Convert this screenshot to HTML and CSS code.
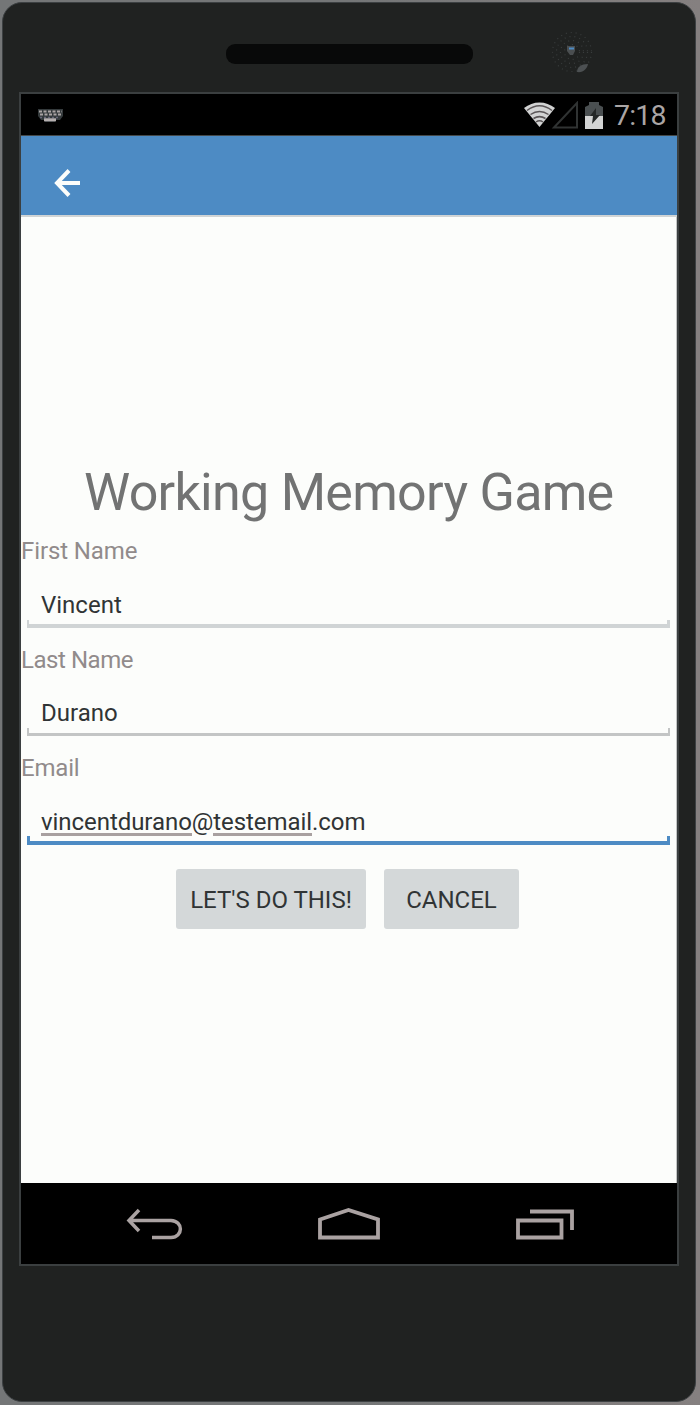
FILE: index.html
```
<!DOCTYPE html>
<html lang="en">
<head>
<meta charset="utf-8">
<title>Working Memory Game</title>
<link rel="stylesheet" href="styles.css">
</head>
<body>
<div class="phone">
  <header class="bezel">
    <div class="speaker"></div>
    <svg class="camera" width="42" height="42" viewBox="0 0 42 42">
      <g fill="none" stroke="#393d3d" stroke-width="1.200" stroke-dasharray="1 4">
        <circle cx="21" cy="21" r="19.500"/>
        <circle cx="21" cy="21" r="15.500"/>
        <circle cx="21" cy="21" r="11.500"/>
        <circle cx="21" cy="21" r="7.500"/>
      </g>
      <path d="M16 15h8v5l-2 4h-3l-3-4z" fill="#4a4e50"/>
      <path d="M18 16.500h5v2h-5z" fill="#4d8bc4"/>
      <path d="M26 41c0-5 4-8 11-8-1 5-5 9-11 8z" fill="#4c5052"/>
    </svg>
  </header>
  <main class="screen">
    <div class="status">
      <svg width="28" height="18" viewBox="0 0 28 18">
        <path d="M1 2h25v7l-3 4h-4l-1 2H8l-1-2H4l-3-4z" fill="#343a3c"/>
        <path d="M2 4.500h23M3 7.500h21" stroke="#aaa4a4" stroke-width="2" stroke-dasharray="3 1.500"/>
        <path d="M3 10.500h20" stroke="#667" stroke-width="1.500" stroke-dasharray="2 2"/>
        <path d="M7 12.800h12" stroke="#b5afaf" stroke-width="3"/>
      </svg>
      <div class="status-right">
        <svg width="82" height="30" viewBox="0 0 82 30">
          <path d="M1 7C10-.5 23-.5 32 7L16.500 26z" fill="#d2d3d3"/>
          <g fill="none" stroke="#5a5557" stroke-width="1.500">
            <path d="M4 9.500c8-6 17-6 25 0M7.500 13.500c6-4 12-4 18 0M10.500 17.500c4-2.500 8-2.500 12 0M13 21c2-1.500 5-1.500 7 0"/>
          </g>
          <path d="M31 26.500L54 2v24.500z" fill="none" stroke="#303333" stroke-width="2"/>
          <path d="M62 6l4-2V1h10v3l4 2v11H62z" fill="#4a4f51"/>
          <path d="M62 15h18v13H62z" fill="#d2d3d3"/>
          <path d="M73 7l-6 8h3l-1 8 8-9h-4z" fill="#242727"/>
        </svg>
        <span class="clock">7:18</span>
      </div>
    </div>
    <nav class="appbar">
      <svg width="28" height="30" viewBox="0 0 28 30">
        <path d="M15 2.500L3 15l12 12.500M2.500 15H26" fill="none" stroke="#fcfdfb" stroke-width="4"/>
      </svg>
    </nav>
    <form class="content">
      <h1 class="title">Working Memory Game</h1>
      <div class="field">
        <div class="label">First Name</div>
        <div class="input">Vincent</div>
      </div>
      <div class="field">
        <div class="label last">Last Name</div>
        <div class="input thin">Durano</div>
      </div>
      <div class="field">
        <div class="label email">Email</div>
        <div class="input focused"><span class="spell">vincentdurano</span>@<span class="spell">testemail</span>.com</div>
      </div>
      <div class="buttons">
        <button type="button" class="button start">LET'S DO THIS!</button>
        <button type="button" class="button cancel">CANCEL</button>
      </div>
    </form>
    <footer class="navbar">
      <svg width="58" height="36" viewBox="0 0 58 36">
        <path d="M13 3L3 13.500 13 24M3 13.500H45C57.500 14 57.500 30 45 30.500H26" fill="none" stroke="#aaa2a2" stroke-width="3.500"/>
      </svg>
      <svg width="64" height="36" viewBox="0 0 64 36">
        <path d="M3 12.500L31.500 3 61 12.500V30.500H3z" fill="none" stroke="#aaa2a2" stroke-width="3.800"/>
      </svg>
      <svg width="60" height="36" viewBox="0 0 60 36">
        <path d="M3 13.500H46.500V30.500H3zM15 4.500H57V23" fill="none" stroke="#aaa2a2" stroke-width="3.800"/>
      </svg>
    </footer>
  </main>
</div>
</body>
</html>
```

FILE: styles.css
```
* {
  box-sizing: border-box;
}

body {
  margin: 0;
  height: 1405px;
  padding: 2px 4px 3px 2px;
  background: linear-gradient(90deg, #747677, #747677 50%, #858080);
  font-family: Roboto, "Liberation Sans", sans-serif;
  overflow: hidden;
}

.phone {
  height: 1400px;
  padding: 0 16px;
  border: 1px solid #3c4042;
  border-radius: 20px;
  background: #202221;
}

.bezel {
  height: 89px;
  display: flex;
  align-items: flex-start;
  padding: 28px 0 0 207px;
}

.speaker {
  width: 247px;
  height: 20px;
  margin-top: 13px;
  border-radius: 9px;
  background: #080909;
}

.camera {
  margin-left: 78px;
}

.screen {
  width: 660px;
  height: 1174px;
  display: flex;
  flex-direction: column;
  border: 2px solid #3b3f40;
  background: #fcfdfb;
}

.status {
  height: 42px;
  display: flex;
  justify-content: space-between;
  padding: 2px 11px 0 16px;
  align-items: center;
  background: #000;
  border-bottom: 1px solid #444849;
}

.status-right {
  display: flex;
  align-items: center;
  gap: 9px;
}

.clock {
  width: 52px;
  color: #aaa5a5;
  font-size: 28.5px;
  letter-spacing: -0.8px;
  line-height: 34px;
  white-space: nowrap;
}

.appbar {
  height: 81px;
  display: flex;
  padding: 32px 0 0 33px;
  background: #4d8bc4;
  border-bottom: 2px solid #d0d4d5;
}

.content {
  height: 966px;
  padding-top: 246px;
  border: solid #c3c5c5;
  border-width: 0 1px 0 0;
}

.title {
  margin: 0 0 14px;
  padding-left: 63px;
  color: #727373;
  font-size: 52px;
  font-weight: 400;
  letter-spacing: -0.72px;
  line-height: 60px;
  white-space: nowrap;
}

.field {
  height: 91px;
  margin-bottom: 17.5px;
}

.label {
  height: 28px;
  color: #918b8b;
  font-size: 24px;
  letter-spacing: -0.1px;
  line-height: 28px;
}

.last {
  letter-spacing: -0.45px;
}

.email {
  letter-spacing: -0.2px;
}

.input {
  height: 63px;
  margin: 0 6px;
  padding: 26px 14px 0;
  color: #303435;
  font-size: 24px;
  line-height: 28px;
  background:
    linear-gradient(#d0d4d5, #d0d4d5) bottom / 100% 4px no-repeat,
    linear-gradient(#d0d4d5, #d0d4d5) left bottom / 2px 8px no-repeat,
    linear-gradient(#d0d4d5, #d0d4d5) right bottom / 3px 8px no-repeat;
}

.thin {
  height: 62px;
  padding-top: 25px;
  background:
    linear-gradient(#c3c5c5, #c3c5c5) bottom / 100% 3px no-repeat,
    linear-gradient(#c3c5c5, #c3c5c5) left bottom / 2px 8px no-repeat,
    linear-gradient(#c3c5c5, #c3c5c5) right bottom / 2px 8px no-repeat;
}

.focused {
  letter-spacing: -0.06px;
  background:
    linear-gradient(#4d8bc4, #4d8bc4) bottom / 100% 4px no-repeat,
    linear-gradient(#4d8bc4, #4d8bc4) left bottom / 3px 9px no-repeat,
    linear-gradient(#4d8bc4, #4d8bc4) right bottom / 3px 9px no-repeat;
}

.spell {
  box-shadow: 0 -3px #a8a0a0 inset;
}

.buttons {
  display: flex;
  gap: 18px;
  padding: 6px 0 0 155px;
}

.button {
  height: 60px;
  padding: 3px 0 0;
  border: 0;
  border-radius: 3px;
  background: #d4d8d9;
  color: #303435;
  font-family: inherit;
  font-size: 24px;
  line-height: 28px;
  white-space: nowrap;
}

.start {
  width: 190px;
}

.cancel {
  width: 135px;
}

.navbar {
  height: 81px;
  display: flex;
  padding: 24px 0 0 105px;
  background: #000;
}

.navbar svg:nth-child(2) {
  margin-left: 133px;
}

.navbar svg:nth-child(3) {
  margin-left: 134px;
}
```
